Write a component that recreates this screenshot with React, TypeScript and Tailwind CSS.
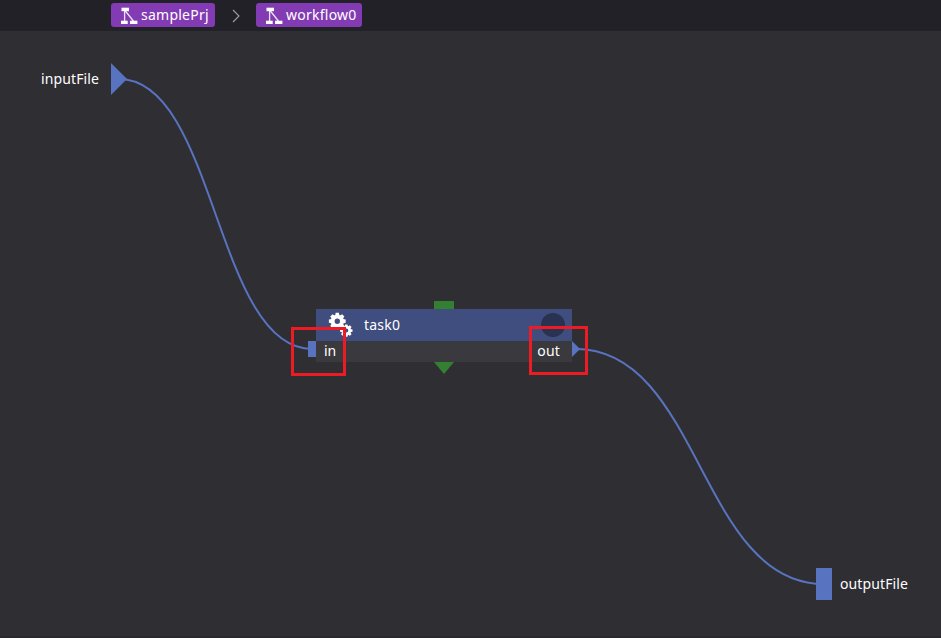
import React from 'react';

function WorkflowIcon() {
  return (
    <svg className="h-[18px] w-[18px] shrink-0" viewBox="0 0 18 18" fill="#fff">
      <rect x="1.5" y="1.7" width="7.5" height="3.5" />
      <rect x="1" y="14.7" width="6.7" height="3.3" />
      <rect x="10" y="14.7" width="7.4" height="3.3" />
      <path d="M4.6 4v11M5.4 5l8 10" stroke="#fff" strokeOpacity="0.85" strokeWidth="1.3" fill="none" />
    </svg>
  );
}

function Crumb({ label, width }: { label: string; width: string }) {
  return (
    <div className={`flex h-6 items-center gap-[3px] rounded-[3px] bg-[#833bb3] pl-[9px] ${width}`}>
      <WorkflowIcon />
      <span className="whitespace-nowrap leading-6 tracking-[0.25px]">{label}</span>
    </div>
  );
}

function Gear({ x, y, scale }: { x: number; y: number; scale: number }) {
  return (
    <g transform={`translate(${x} ${y}) scale(${scale})`}>
      <circle r="4.6" fill="none" stroke="#fff" strokeWidth="3.8" />
      {[0, 45, 90, 135, 180, 225, 270, 315].map((angle) => (
        <path key={angle} d="M-2.2-5.5L-1.6-8.4H1.6L2.2-5.5Z" fill="#fff" transform={`rotate(${angle})`} />
      ))}
    </g>
  );
}

function TaskNode() {
  return (
    <div className="absolute left-[316px] top-[278px] h-[53px] w-64">
      <div className="flex h-8 items-center justify-between bg-[#404e7f] pl-12 pr-[7px]">
        <span className="tracking-[0.2px]">task0</span>
        <span className="h-6 w-6 rounded-full bg-[#293250]" />
      </div>
      <div className="flex h-[21px] items-start justify-between bg-[#3a393d] pl-2 pr-3 leading-[19px]">
        <span>in</span>
        <span className="tracking-[0.2px]">out</span>
      </div>
    </div>
  );
}

export default function App() {
  return (
    <div className="flex h-[638px] w-[941px] flex-col overflow-hidden bg-[#2f2e33] font-['Noto_Sans',sans-serif] text-[14px] leading-5 text-white">
      <header className="flex h-[31px] shrink-0 items-start bg-[#222127] pl-[111px] pt-[3px]">
        <Crumb label="samplePrj" width="w-[104px]" />
        <svg className="ml-[15px] mr-[14px] h-6 w-3" viewBox="0 0 12 24">
          <path d="M3 7l6 6-6 6" fill="none" stroke="#a09fa2" strokeWidth="1.1" />
        </svg>
        <Crumb label="workflow0" width="w-[106px]" />
      </header>
      <main className="relative flex-1 border-b-2 border-[#29282d]">
        <TaskNode />
        <svg className="absolute left-0 top-0 h-[605px] w-[941px]" viewBox="0 31 941 605">
          <g fill="none" stroke="#5873bf" strokeWidth="2">
            <path d="M119 79C215.5 79 215.5 349 312 349" />
            <path d="M576 349C700 349 700 584 824 584" />
          </g>
          <g fill="#5873bf">
            <path d="M111 63l16 16-16 16z" />
            <path d="M308 341h8v16h-8z" />
            <path d="M572 341l8 8-8 8z" />
            <path d="M816 568h16v32h-16z" />
          </g>
          <path d="M434 301h20v8h-20zM434 362h20l-10 12z" fill="#348032" />
          <Gear x={337.3} y={321.2} scale={1} />
          <Gear x={346.3} y={330.6} scale={0.74} />
        </svg>
        <span className="absolute left-[41px] top-[38px] tracking-[0.12px]">inputFile</span>
        <span className="absolute left-[840px] top-[543px] tracking-[0.12px]">outputFile</span>
        <div className="absolute left-[291px] top-[296px] h-[49px] w-[55px] border-3 border-[#ed1c24]" />
        <div className="absolute left-[529px] top-[295px] h-[49px] w-[59px] border-3 border-[#ed1c24]" />
      </main>
    </div>
  );
}
